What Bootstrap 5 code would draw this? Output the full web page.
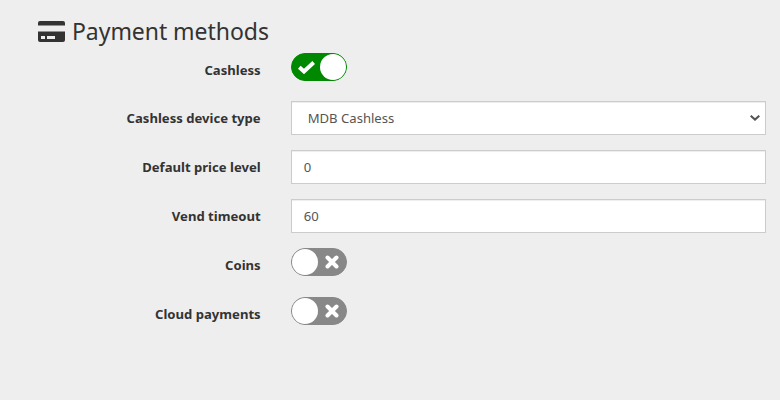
<!DOCTYPE html>
<html lang="en">
<head>
  <meta charset="UTF-8">
  <meta name="viewport" content="width=device-width, initial-scale=1.0">
  <title>Payment methods</title>
  <link href="https://cdn.jsdelivr.net/npm/bootstrap@5.3.0/dist/css/bootstrap.min.css" rel="stylesheet">
  <style>
    body {
      background: #eee;
      color: #333;
      font-family: "Noto Sans", sans-serif;
      font-size: 13.1px;
      line-height: 20px;
    }
    .settings-wrap {
      padding: 14px 14px 0 38px;
    }
    .settings-title {
      display: flex;
      align-items: center;
      gap: 7px;
      height: 34px;
      margin: 0 0 5px;
      font-size: 23px;
      font-weight: 400;
      letter-spacing: -.05px;
      line-height: 34px;
      color: #333;
    }
    .settings-title svg {
      flex: none;
    }
    .setting-row {
      --bs-gutter-x: 30px;
      margin-bottom: 15px;
    }
    .setting-row.first-row {
      margin-bottom: 14px;
    }
    .setting-label {
      margin: 0;
      padding-top: 7px;
      padding-right: 15px;
      text-align: right;
      font-weight: 700;
      color: #333;
    }
    .setting-row .form-control,
    .setting-row .form-select {
      height: 34px;
      padding: 6px 12px;
      border: 1px solid #ccc;
      border-radius: 0;
      font-size: 13.1px;
      line-height: 20px;
      color: #555;
      box-shadow: inset 0 1px 1px rgba(0, 0, 0, .075);
    }
    .setting-row .form-select {
      padding-left: 16px;
      background-image: url("data:image/svg+xml,%3csvg xmlns='http://www.w3.org/2000/svg' viewBox='0 0 10 6'%3e%3cpath fill='none' stroke='%23555' stroke-width='2' d='M.7.7L5 4.600 9.300.7'/%3e%3c/svg%3e");
      background-position: right 5px center;
      background-size: 10px 6px;
    }
    .switch-row {
      height: 34px;
    }
    .toggler {
      display: block;
      position: relative;
      width: 56px;
      height: 28px;
      margin: 0;
      cursor: pointer;
    }
    .toggler input {
      position: absolute;
      opacity: 0;
    }
    .toggler-track {
      display: flex;
      align-items: center;
      justify-content: flex-end;
      height: 28px;
      padding: 0 7px;
      border: 1px solid #888;
      border-radius: 14px;
      background: #888;
    }
    .toggler-knob {
      position: absolute;
      top: 1px;
      left: 1px;
      width: 26px;
      height: 26px;
      border-radius: 50%;
      background: #fff;
    }
    .toggler input:checked + .toggler-track {
      justify-content: flex-start;
      padding: 0 6px;
      border-color: #008800;
      background: #008800;
    }
    .toggler input:checked ~ .toggler-knob {
      left: 29px;
    }
  </style>
</head>
<body>

<div class="settings-wrap">
  <h4 class="settings-title">
    <svg width="27" height="21" viewBox="0 0 27 21">
      <path fill="#333" d="M2 0h23a2 2 0 0 1 2 2v2.500H0V2a2 2 0 0 1 2-2zM0 10.500h27V19a2 2 0 0 1-2 2H2a2 2 0 0 1-2-2z"/>
      <rect x="3" y="15" width="4" height="3" fill="#eee"/>
      <rect x="9" y="15" width="8" height="3" fill="#eee"/>
    </svg>
    Payment methods
  </h4>

  <form>
    <div class="row setting-row switch-row first-row">
      <label class="col-4 setting-label" for="cashless">Cashless</label>
      <div class="col-8">
        <label class="toggler">
          <input type="checkbox" id="cashless" checked>
          <span class="toggler-track">
            <svg width="17" height="13" viewBox="0 0 17 13"><path fill="none" stroke="#fff" stroke-width="4" d="M1.300 6.300l4.700 4.200 9.700-9"/></svg>
          </span>
          <span class="toggler-knob"></span>
        </label>
      </div>
    </div>

    <div class="row setting-row">
      <label class="col-4 setting-label" for="deviceType">Cashless device type</label>
      <div class="col-8">
        <select class="form-select" id="deviceType">
          <option>MDB Cashless</option>
        </select>
      </div>
    </div>

    <div class="row setting-row">
      <label class="col-4 setting-label" for="priceLevel">Default price level</label>
      <div class="col-8">
        <input type="text" class="form-control" id="priceLevel" value="0">
      </div>
    </div>

    <div class="row setting-row">
      <label class="col-4 setting-label" for="vendTimeout">Vend timeout</label>
      <div class="col-8">
        <input type="text" class="form-control" id="vendTimeout" value="60">
      </div>
    </div>

    <div class="row setting-row switch-row">
      <label class="col-4 setting-label" for="coins">Coins</label>
      <div class="col-8">
        <label class="toggler">
          <input type="checkbox" id="coins">
          <span class="toggler-track">
            <svg width="14" height="14" viewBox="0 0 14 14"><path fill="none" stroke="#fff" stroke-width="4" stroke-linecap="round" d="M2.500 2.500l9 9M11.500 2.500l-9 9"/></svg>
          </span>
          <span class="toggler-knob"></span>
        </label>
      </div>
    </div>

    <div class="row setting-row switch-row">
      <label class="col-4 setting-label" for="cloud">Cloud payments</label>
      <div class="col-8">
        <label class="toggler">
          <input type="checkbox" id="cloud">
          <span class="toggler-track">
            <svg width="14" height="14" viewBox="0 0 14 14"><path fill="none" stroke="#fff" stroke-width="4" stroke-linecap="round" d="M2.500 2.500l9 9M11.500 2.500l-9 9"/></svg>
          </span>
          <span class="toggler-knob"></span>
        </label>
      </div>
    </div>
  </form>
</div>

<script src="https://cdn.jsdelivr.net/npm/bootstrap@5.3.0/dist/js/bootstrap.bundle.min.js"></script>
</body>
</html>
